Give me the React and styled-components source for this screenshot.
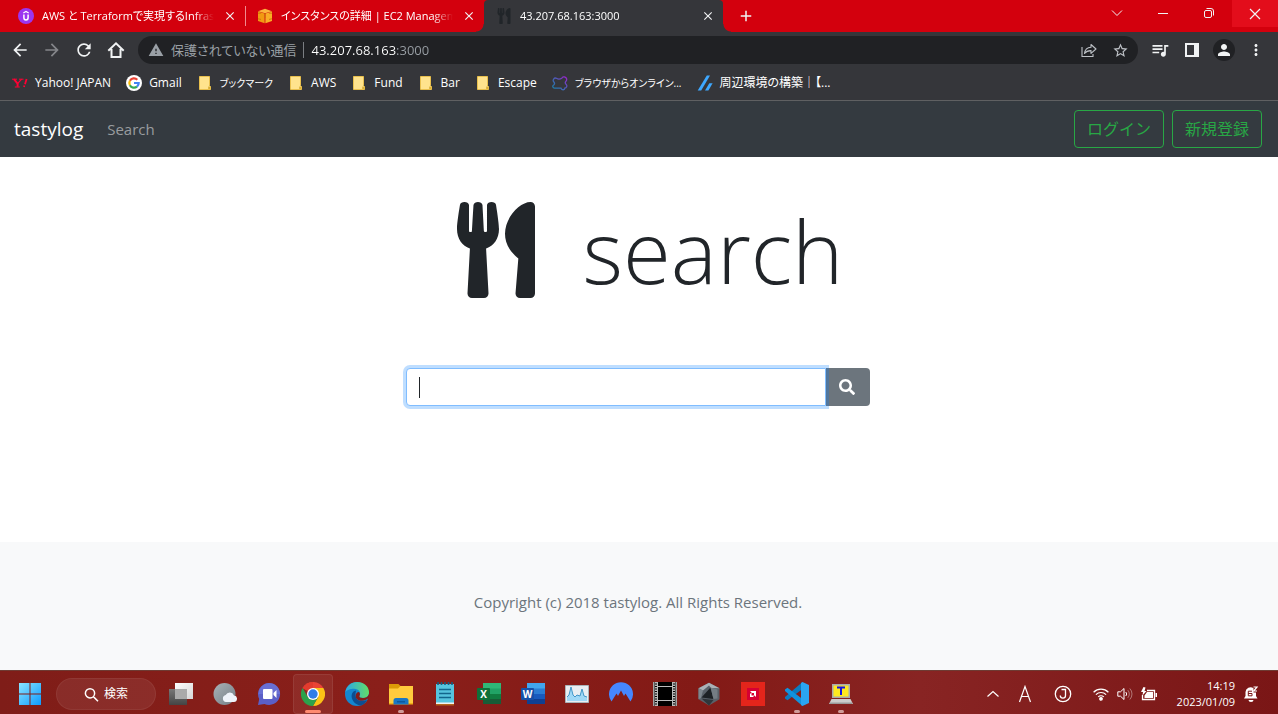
import React from "react";
import styled, { createGlobalStyle, css } from "styled-components";
import { FaUtensils, FaSearch } from "react-icons/fa";
import {
  MdArrowBack,
  MdArrowForward,
  MdRefresh,
  MdWarning,
  MdStarOutline,
  MdQueueMusic,
  MdPerson,
  MdMoreVert,
  MdClose,
  MdAdd,
} from "react-icons/md";

const GlobalStyle = createGlobalStyle`
  *, *::before, *::after { box-sizing: border-box; }
  body {
    margin: 0;
    color: #212529;
    background: #fff;
    font-family: "Open Sans", "Noto Sans CJK JP", sans-serif;
    font-size: 15px;
    line-height: 24px;
  }
  button, input { font: inherit; color: inherit; }
  button { margin: 0; padding: 0; border: 0; background: none; cursor: pointer; }
  a { color: inherit; text-decoration: none; }
  svg { display: block; flex: none; }
`;

const Screen = styled.div`
  display: flex;
  flex-direction: column;
  min-height: 100vh;
`;

/* ---------- browser window ---------- */

const TabStrip = styled.div`
  display: flex;
  height: 32px;
  padding-left: 6px;
  background: #d3000d;
  color: #fff;
`;

const Tab = styled.div`
  position: relative;
  display: flex;
  align-items: center;
  flex: 0 1 239px;
  min-width: 0;
  gap: 8px;
  padding: 0 7px 0 12px;
  ${(p) =>
    p.$divided &&
    css`
      &::after {
        content: "";
        position: absolute;
        right: -1px;
        top: 6px;
        width: 1px;
        height: 20px;
        background: #f08a8f;
      }
    `}
  ${(p) =>
    p.$active &&
    css`
      background: #35363a;
      border-radius: 4px 4px 0 0;
      &::before,
      &::after {
        content: "";
        position: absolute;
        bottom: 0;
        width: 8px;
        height: 8px;
      }
      &::before {
        right: 100%;
        background: radial-gradient(circle at 0 0, #d3000d 7px, #35363a 8px);
      }
      &::after {
        left: 100%;
        background: radial-gradient(circle at 100% 0, #d3000d 7px, #35363a 8px);
      }
    `}
`;

const TabTitle = styled.span`
  flex: 1;
  overflow: hidden;
  white-space: nowrap;
  font-size: 11px;
  line-height: 16px;
  font-feature-settings: "palt";
  mask-image: linear-gradient(to right, #000 calc(100% - 20px), transparent);
`;

const IconButton = styled.button`
  display: flex;
  flex: none;
  align-items: center;
  justify-content: center;
  width: ${(p) => p.$width || 32}px;
  height: ${(p) => p.$height || 28}px;
  color: ${(p) => p.$color || "#f1f3f4"};
  background: ${(p) => p.$background || "none"};
`;

const NewTab = styled(IconButton)`
  align-self: center;
  margin-left: 12px;
`;

const WindowControls = styled.div`
  display: flex;
  margin-left: auto;
`;

const Toolbar = styled.div`
  display: flex;
  align-items: center;
  height: 36px;
  padding: 0 6px 0 4px;
  background: #35363a;
`;

const AddressBar = styled.div`
  display: flex;
  flex: 1;
  align-items: center;
  height: 28px;
  margin: 0 6px;
  padding: 0 6px 0 10px;
  gap: 7px;
  border-radius: 14px;
  background: #202124;
  color: #9aa0a6;
  font-size: 13px;
  font-feature-settings: "palt";
`;

const Divider = styled.span`
  width: 1px;
  height: 16px;
  background: #7b7e82;
`;

const Url = styled.input`
  flex: 1;
  min-width: 0;
  padding: 0;
  border: 0;
  outline: 0;
  color: transparent;
  background: linear-gradient(90deg, #fff 85px, #9aa0a6 85px);
  background-clip: text;
`;

const Avatar = styled.span`
  display: flex;
  align-items: center;
  justify-content: center;
  width: 22px;
  height: 22px;
  border-radius: 50%;
  background: #202124;
`;

const Bookmarks = styled.nav`
  display: flex;
  align-items: center;
  gap: 15px;
  height: 33px;
  padding: 0 12px 2px;
  border-bottom: 1px solid #5f6062;
  background: #35363a;
`;

const Bookmark = styled.a`
  display: flex;
  align-items: center;
  gap: 7px;
  color: #fff;
  font-size: ${(p) => (p.$kana ? 10 : 12)}px;
  line-height: 20px;
  white-space: nowrap;
  font-feature-settings: "palt";
`;

/* ---------- tastylog page ---------- */

const Navbar = styled.header`
  display: flex;
  align-items: center;
  height: 56px;
  padding: 0 16px 0 14px;
  background: #343a40;
`;

const Brand = styled.a`
  margin-right: 24px;
  color: #fff;
  font-size: 19px;
  line-height: 30px;
`;

const NavLink = styled.a`
  color: #999c9f;
`;

const NavActions = styled.div`
  display: flex;
  gap: 8px;
  margin-left: auto;
`;

const OutlineButton = styled.button`
  height: 38px;
  padding: 0 12px;
  border: 1px solid #28a745;
  border-radius: 4px;
  color: #28a745;
  font-size: 16px;
`;

const Main = styled.main`
  display: flex;
  flex: 1;
  flex-direction: column;
  align-items: center;
  padding: 32px 18px 32px 16px;
`;

const Hero = styled.h1`
  display: flex;
  align-items: center;
  gap: 48px;
  height: 122px;
  margin: 0 0 57px;
  padding-left: 24px;
  font-size: 87px;
  font-weight: 300;
  line-height: 122px;
`;

const HeroIcon = styled(FaUtensils)`
  width: 78px;
  height: 96px;
`;

const SearchForm = styled.form`
  display: flex;
  width: 100%;
  max-width: 464px;
`;

const SearchField = styled.div`
  position: relative;
  z-index: 1;
  flex: 1;
  &::before {
    content: "";
    position: absolute;
    left: 13px;
    top: 9px;
    width: 1px;
    height: 21px;
    background: #212529;
  }
`;

const SearchInput = styled.input`
  display: block;
  width: 100%;
  height: 38px;
  padding: 6px 12px;
  border: 1px solid #80bdff;
  border-radius: 4px 0 0 4px;
  outline: 0;
  background: #fff;
  box-shadow: 0 0 0 3px rgba(0, 123, 255, 0.25);
`;

const SearchButton = styled.button`
  display: flex;
  align-items: center;
  justify-content: center;
  width: 44px;
  height: 38px;
  padding-right: 2px;
  border-radius: 0 4px 4px 0;
  background: #6c757d;
  color: #fff;
`;

const Footer = styled.footer`
  padding: 48px 18px 56px 16px;
  background: #f8f9fa;
  color: #6c757d;
  text-align: center;
`;

/* ---------- taskbar ---------- */

const Taskbar = styled.div`
  display: flex;
  align-items: center;
  height: 44px;
  padding: 3px 19px 0 8px;
  border-top: 1px solid #6e3b33;
  background: linear-gradient(90deg, #7f1d18, #8a1f1a 30%, #831a16 55%, #882423 72%, #7a1616);
  color: #fff;
`;

const TaskButton = styled.button`
  position: relative;
  display: flex;
  flex: none;
  align-items: center;
  justify-content: center;
  width: 44px;
  height: 40px;
  ${(p) =>
    p.$active &&
    css`
      &::before {
        content: "";
        position: absolute;
        inset: 0 2px;
        border: 1px solid rgba(255, 255, 255, 0.08);
        border-radius: 4px;
        background: rgba(255, 255, 255, 0.06);
      }
    `}
  ${(p) =>
    (p.$active || p.$running) &&
    css`
      &::after {
        content: "";
        position: absolute;
        bottom: 1px;
        width: ${p.$active ? 16 : 6}px;
        height: 3px;
        border-radius: 2px;
        background: ${p.$active ? "#ff8a70" : "#cf9c9a"};
      }
    `}
  svg {
    position: relative;
  }
`;

const TaskSearch = styled.button`
  display: flex;
  align-items: center;
  justify-content: center;
  gap: 5px;
  width: 100px;
  height: 32px;
  margin: 0 3px 0 4px;
  border: 1px solid rgba(255, 255, 255, 0.06);
  border-radius: 16px;
  background: rgba(255, 255, 255, 0.07);
  font-size: 12px;
`;

const Tray = styled.div`
  display: flex;
  align-items: center;
  margin-left: auto;
`;

const TrayButton = styled.button`
  display: flex;
  align-items: center;
  justify-content: center;
  width: ${(p) => p.$width}px;
  height: 32px;
`;

const Clock = styled.time`
  width: 70px;
  margin-right: 8px;
  font-size: 11px;
  line-height: 16px;
  text-align: right;
`;

/* ---------- drawings ---------- */

const Udemy = () => (
  <svg width="16" height="16" viewBox="0 0 16 16">
    <circle cx="8" cy="8" r="8" fill="#9b35f0" />
    <path d="M5.3 4.9 8 3.4l2.700 1.500" fill="none" stroke="#fff" strokeWidth="1.200" />
    <path d="M5.900 6.400v3.400a2.100 2.100 0 0 0 4.200 0V6.400" fill="none" stroke="#fff" strokeWidth="1.500" />
  </svg>
);

const Cube = () => (
  <svg width="16" height="16" viewBox="0 0 16 16">
    <path d="M1 3.2 8 .8l7 2.4L8 5.2z" fill="#fcb43c" />
    <path d="M1 3.6 7.6 5.6v9.6L1 13z" fill="#f19a12" />
    <path d="M15 3.6 8.4 5.6v9.6L15 13z" fill="#f9ad25" />
    <path d="M1 5.2h3M1 10.8l3 .6M15 5.2h-3M15 10.8l-3 .6M8 5v5" stroke="#c56f08" strokeWidth=".8" />
  </svg>
);

const Yahoo = () => (
  <svg width="16" height="16" viewBox="0 0 16 16" stroke="#ff0033" fill="none">
    <path d="M0 4.2h5M7 4.2h4.5M2.8 12h5" strokeWidth="1" />
    <path d="M2 4.2 5.6 8.6v3.2" strokeWidth="2" />
    <path d="M9.6 4.2 5.8 8.4" strokeWidth="1.2" />
    <path d="M14.6 4 13 9.2M12.4 10.6l-.4 1.4" strokeWidth="1.8" />
  </svg>
);

const Google = () => (
  <svg width="16" height="16" viewBox="0 0 16 16" fill="none">
    <circle cx="8" cy="8" r="8" fill="#fff" />
    <g strokeWidth="2.200">
      <path d="M11.300 4.700A4.700 4.700 0 0 0 3.900 5.800" stroke="#ea4335" />
      <path d="M3.900 5.800a4.700 4.700 0 0 0 0 4.400" stroke="#fbbc05" />
      <path d="M3.900 10.200a4.700 4.700 0 0 0 7.100 1.400" stroke="#34a853" />
      <path d="M11 11.600A4.700 4.700 0 0 0 12.700 8H8" stroke="#4285f4" />
    </g>
  </svg>
);

const Home = () => (
  <svg width="18" height="18" viewBox="0 0 18 18" fill="none" stroke="currentColor" strokeWidth="2">
    <path d="M1.300 9.700 9 2.300l7.700 7.400M4.500 8v8h9V8" />
  </svg>
);

const Folder = () => (
  <svg width="16" height="16" viewBox="0 0 16 16">
    <path d="M2.5 1.5h10v9.2l1 .8v3h-11z" fill="#ffe38d" stroke="#e9c04d" />
    <path d="M11.2 14V11.5l2 .2V14z" fill="#d9ad35" />
  </svg>
);

const Bear = () => (
  <svg width="16" height="16" viewBox="0 0 16 16" fill="none">
    <defs>
      <linearGradient id="bear" x1="0" y1="1" x2="1" y2="0">
        <stop offset="0" stopColor="#1684a7" />
        <stop offset=".6" stopColor="#5754b8" />
        <stop offset="1" stopColor="#a11fd0" />
      </linearGradient>
    </defs>
    <path
      d="M9 13.200H2.500a1.700 1.700 0 0 1-.8-3.200c1-.8 1-2 .2-3A2.300 2.300 0 0 1 4.500 3.300C6 4.300 8 4.300 9.800 3.200a2.600 2.600 0 1 1 4 3.200c-.8 1-.8 2 .4 3a2.200 2.200 0 0 1-1.400 3.700c0 2-2.800 2.400-3.800.1z"
      stroke="url(#bear)"
      strokeWidth="1.300"
    />
  </svg>
);

const Slashes = () => (
  <svg width="16" height="16" viewBox="0 0 16 16" fill="#3ea8ff">
    <path d="M.7 15.500h3.500L13 .500h-3.200z" />
    <path d="M8 15.500h3.400L15.600 8.200h-3.300z" />
  </svg>
);

const Share = () => (
  <svg width="16" height="16" viewBox="0 0 16 16" fill="none" stroke="currentColor" strokeWidth="1.1">
    <path d="M1 5v9.500h11V12" />
    <path d="M3.500 11.500C4 7.500 6.500 5.500 10 5.300V2.500l5 4.500-5 4.300V8.600c-3-.1-5 .9-6.500 2.900z" strokeLinejoin="round" />
  </svg>
);

const SidePanel = () => (
  <svg width="14" height="14" viewBox="0 0 14 14">
    <path fillRule="evenodd" d="M0 0h14v14H0zM2 2v10h7V2z" fill="#f1f3f4" />
  </svg>
);

const Stroke = ({ d, size = 12, width = 1 }) => (
  <svg width={size} height={size} viewBox="0 0 12 12" fill="none" stroke="currentColor" strokeWidth={width}>
    <path d={d} />
  </svg>
);

const Art = ({ children }) => (
  <svg width="24" height="24" viewBox="0 0 24 24">
    {children}
  </svg>
);

const Windows = () => (
  <Art>
    <defs>
      <linearGradient id="win" x1="0" y1="0" x2="1" y2="1">
        <stop offset="0" stopColor="#8be4ff" />
        <stop offset="1" stopColor="#0d9bff" />
      </linearGradient>
    </defs>
    <path d="M1 1h10.500v10.500H1zM12.500 1H23v10.500H12.500zM1 12.500h10.500V23H1zM12.500 12.500H23V23H12.500z" fill="url(#win)" />
  </Art>
);

const TaskView = () => (
  <Art>
    <defs>
      <linearGradient id="tvA" x1="0" y1="0" x2="1" y2="1">
        <stop offset="0" stopColor="#fff" />
        <stop offset="1" stopColor="#d6d6d6" />
      </linearGradient>
      <linearGradient id="tvB" x1="0" y1="0" x2="0" y2="1">
        <stop offset="0" stopColor="#777" />
        <stop offset="1" stopColor="#444" />
      </linearGradient>
    </defs>
    <path d="M6 1h18v16H6z" fill="url(#tvA)" />
    <path d="M0 7h18v16H0z" fill="url(#tvB)" />
    <path d="M6 7h12v10H6z" fill="#aaa" />
  </Art>
);

const Weather = () => (
  <Art>
    <defs>
      <linearGradient id="moon" x1="0" y1="0" x2="1" y2="1">
        <stop offset="0" stopColor="#a9b2b7" />
        <stop offset="1" stopColor="#737e86" />
      </linearGradient>
    </defs>
    <circle cx="11.500" cy="12" r="11" fill="url(#moon)" />
    <path d="M13 20a3.500 3.500 0 0 1-.3-6.900 4.500 4.500 0 0 1 8.300.4 3.200 3.200 0 0 1-.5 6.500z" fill="#eef3fa" />
  </Art>
);

const Chat = () => (
  <Art>
    <path d="M12 1a11 11 0 1 1-4.500 21L1 23l1.200-6A11 11 0 0 1 12 1z" fill="#5b5fc7" />
    <path d="M12 1a11 11 0 0 1 11 11H1.500A11 11 0 0 1 12 1z" fill="#7379da" opacity=".6" />
    <rect x="6" y="7" width="9.500" height="10" rx="1" fill="#fff" />
    <path d="m16.500 11 3-3v8l-3-3z" fill="#fff" />
  </Art>
);

const Chrome = () => (
  <Art>
    <path d="M12 12 1.600 6A12 12 0 0 1 22.400 6z" fill="#ea4335" />
    <path d="M12 12V6h10.400A12 12 0 0 1 12 24l5.200-9z" fill="#fbc116" />
    <path d="M12 24A12 12 0 0 1 1.600 6l5.200 9 5.200 3 5.200-3z" fill="#2ba24c" />
    <path d="M12 12 1.600 6A12 12 0 0 1 12 0v6z" fill="#e33b2e" />
    <circle cx="12" cy="12" r="6" fill="#fff" />
    <circle cx="12" cy="12" r="4.700" fill="#2f7de9" />
  </Art>
);

const Edge = () => (
  <Art>
    <defs>
      <linearGradient id="edgeA" x1="0" y1="0" x2="1" y2="0">
        <stop offset="0" stopColor="#2aa8e8" />
        <stop offset="1" stopColor="#63dd66" />
      </linearGradient>
    </defs>
    <circle cx="12" cy="12" r="12" fill="#1486cf" />
    <path d="M.3 10C1.500 4 6 0 12 0c7 0 12 4.800 12 10.200 0 3.600-2.700 5.800-6 5.800-2.800 0-4-1-3.600-2 2-3-.2-7.200-5.400-7.200C5 6.800 1.500 8.500.3 10z" fill="url(#edgeA)" />
    <path d="M11 8.400c-4 .6-5 4.600-4 8 1 3.600 4.500 6.400 9 7 3-1 5-3 6-5.400-6 2.600-11 .2-11.500-4-.2-2 .2-3.600.5-5.600z" fill="#0c4e91" />
    <path d="M14.400 14c.8-1 .8-3-.4-4-2 0-3.600 2-3.400 4.400.4 3.600 5.400 5.600 10.400 3.400l2-1.200-.5 2.400L24 16V12c-1 3-3.500 4-6 4-2.800 0-4-1-3.600-2z" fill="#841c18" />
  </Art>
);

const Explorer = () => (
  <Art>
    <path d="M0 4h24v18H0z" fill="#ffcb3d" />
    <path d="M0 2h9.500L11.500 4 9 6.500H0z" fill="#dc9a07" />
    <path d="M0 21h24v1.500H0z" fill="#f1ae17" />
    <path d="M4.500 22.500v-4a2.500 2.500 0 0 1 2.500-2.500h10a2.500 2.500 0 0 1 2.500 2.500v4z" fill="#1976c4" />
    <path d="M8 19h8v1.500H8z" fill="#0c599e" />
  </Art>
);

const Notepad = () => (
  <Art>
    <path d="M3 2h18v19H3z" fill="#56c4de" />
    <path d="M3 21h18v2.500H3z" fill="#b5651d" />
    <path d="M3 20.500h18V22H3z" fill="#f2f2f2" />
    <path d="M5 0v3M8.500 0v3M12 0v3M15.500 0v3M19 0v3" stroke="#135d80" strokeWidth="1.600" />
    <path d="M6 7.500h12M6 11.500h12M6 15.500h12" stroke="#12668c" strokeWidth="1.500" />
  </Art>
);

const Office = ({ colors, letter }) => (
  <Art>
    <path d="M6 1h18v21H6z" fill={colors[0]} />
    <path d="M6 6.500h18V22H6z" fill={colors[1]} />
    <path d="M6 12h18v10H6z" fill={colors[2]} />
    <path d="M6 17h18v5H6z" fill={colors[3]} />
    <rect y="6" width="13" height="12" rx="1" fill={colors[4]} />
    <text x="6.500" y="15.500" textAnchor="middle" fontSize="10" fontWeight="700" fill="#fff">
      {letter}
    </text>
  </Art>
);

const Monitor = () => (
  <Art>
    <path d="M.5 3.500h23v17H.5z" fill="#e9eef2" stroke="#aab4ba" />
    <path d="M2 19v-4l2-2 2-8 2 8 2 2 2-2 3 1 2-7 2 7 3 1v4z" fill="#9fd8f6" />
    <path d="m2 15 2-2 2-8 2 8 2 2 2-2 3 1 2-7 2 7 3 1" fill="none" stroke="#4096c8" />
  </Art>
);

const Nord = () => (
  <Art>
    <path
      d="M2.500 19.500A12 12 0 1 1 21.500 19.500L16.500 11.500 15 14 12 8.500 9 14 7.500 11.500z"
      fill="#4687ff"
    />
  </Art>
);

const Film = () => (
  <Art>
    <path d="M0 0h24v24H0z" fill="#000" />
    <path d="M.8 0v24M23.200 0v24" stroke="#aaa" strokeWidth="1.500" />
    <path d="M3 0v24M21 0v24" stroke="#ccc" strokeWidth="1.800" strokeDasharray="1.500 1" />
    <path d="M4.500 0v24M19.500 0v24M5 4.500h14M5 18.500h14" stroke="#bbb" />
  </Art>
);

const Hexagon = () => (
  <Art>
    <path d="m12 .8 10.500 5.500v11L12 23.500 1.500 17.300v-11z" fill="#596169" />
    <path d="m12 .8 10.500 5.500L14 6 12 3.500 6 8.500l-4.500-2.200z" fill="#aab1b6" />
    <path d="M1.500 6.300 6 8.500 4 16l-2.500 1.300z" fill="#7d868d" />
    <path d="M13.500 5.500 16.500 17 4.500 15.500z" fill="#1d2226" />
    <path d="m13.500 5.500 7 2v9l-4 .5z" fill="#747d84" />
    <path d="m4.500 16.500 12 1.500-4.500 5.500z" fill="#30363b" />
  </Art>
);

const Amd = () => (
  <Art>
    <path d="M0 0h24v24H0z" fill="#e4251b" />
    <path d="M6 6h12v12H6z" fill="#d60032" />
    <path d="M9 9h6v6l-2-2v-2h-2z M9 12l1.500-1.500v3h3L12 15H9z" fill="#fff" />
  </Art>
);

const VsCode = () => (
  <Art>
    <path d="M17.500 0v7L2.500 18.300 0 16.500v-1.500z" fill="#0b7bc0" />
    <path d="M17.500 24v-7L2.500 5.700 0 7.500V9z" fill="#1292de" />
    <path d="M17.500 0 24 3v18l-6.500 3-1.500-1V1z" fill="#2aa5f2" />
  </Art>
);

const Terminal = () => (
  <Art>
    <path d="M3 2h18v14H3z" fill="#aaa" />
    <path d="M4.500 3.500h15v11h-15z" fill="#ffe91f" />
    <path d="M8 5.500h8M12 5v8" stroke="#1515e0" strokeWidth="2" fill="none" />
    <path d="M2.500 17h19L24 22H0z" fill="#ccc" />
    <path d="M1 20.500h22l.5 1.500H.5z" fill="#999" />
  </Art>
);

const Wifi = () => (
  <svg width="16" height="14" viewBox="0 0 16 14" fill="none" stroke="#fff" strokeWidth="1.200">
    <path d="M.6 5.200a10.500 10.500 0 0 1 14.800 0M2.900 7.600a7.200 7.200 0 0 1 10.200 0M5.200 9.900a4 4 0 0 1 5.600 0" />
    <circle cx="8" cy="11.800" r="1.300" fill="#fff" />
  </svg>
);

const Volume = () => (
  <svg width="16" height="14" viewBox="0 0 16 14" fill="none" stroke="#fff">
    <path d="M.8 4.800h2.700L7 1.500v11L3.500 9.200H.8zM8.800 5a3 3 0 0 1 0 4" />
    <path d="M10.800 3.200a5.500 5.500 0 0 1 0 7.600M12.800 1.500a8 8 0 0 1 0 11" opacity=".4" />
  </svg>
);

const Battery = () => (
  <svg width="18" height="14" viewBox="0 0 18 14">
    <path d="M7 3.500h7.500v9h-12V8" fill="none" stroke="#fff" strokeWidth="1.300" />
    <path d="M7 5h6v6H4.500V8.500zM15.500 6H17v4h-1.500z" fill="#fff" />
    <path d="M3.500 0 1 5h2L2.500 8.500 6.500 4h-2L5.500.5z" fill="#fff" />
  </svg>
);

const Bell = () => (
  <svg width="16" height="16" viewBox="0 0 16 16">
    <path d="M1 12.500 2.500 10V6a5 5 0 0 1 8-3.800v4.300H13V10l1.500 2.500z" fill="#fff" />
    <path d="M5.500 14h5a2.500 2 0 0 1-5 0z" fill="#fff" />
    <path d="M10.500 1h3.500l-3.300 4H14" fill="none" stroke="#fff" strokeWidth="1.200" />
    <path d="M9 5.200H5.300v4.600H9V7.500H5.300" fill="none" stroke="#7a1616" strokeWidth="1" />
  </svg>
);

const ImeLetter = () => (
  <svg width="14" height="18" viewBox="0 0 14 18" fill="none" stroke="#fff" strokeWidth="1.200">
    <path d="M1.500 17 7 1.500 12.500 17M3.500 11.500h7" />
  </svg>
);

const ImeMark = () => (
  <svg width="18" height="18" viewBox="0 0 18 18" fill="none" stroke="#fff" strokeWidth="1.300">
    <circle cx="9" cy="9" r="7.700" />
    <path d="M7.500 4.500h4v6a2.600 2.600 0 0 1-5.200 0" />
  </svg>
);

const bookmarks = [
  { name: "Yahoo! JAPAN", Icon: Yahoo },
  { name: "Gmail", Icon: Google },
  { name: "ブックマーク", Icon: Folder, kana: true },
  { name: "AWS", Icon: Folder },
  { name: "Fund", Icon: Folder },
  { name: "Bar", Icon: Folder },
  { name: "Escape", Icon: Folder },
  { name: "ブラウザからオンライン...", Icon: Bear, kana: true },
  { name: "周辺環境の構築｜【...", Icon: Slashes },
];

const Excel = () => <Office letter="X" colors={["#2fb777", "#21a366", "#107c41", "#185c37", "#0f7038"]} />;
const Word = () => <Office letter="W" colors={["#41a5ee", "#2b7cd3", "#185abd", "#103f91", "#1650a8"]} />;

const apps = [
  ["Task view", TaskView],
  ["Weather", Weather],
  ["Chat", Chat],
  ["Chrome", Chrome, "active"],
  ["Edge", Edge],
  ["Explorer", Explorer, "running"],
  ["Notepad", Notepad],
  ["Excel", Excel],
  ["Word", Word],
  ["Performance monitor", Monitor],
  ["VPN", Nord],
  ["Video", Film],
  ["Cube", Hexagon],
  ["AMD", Amd],
  ["VS Code", VsCode, "running"],
  ["Terminal", Terminal, "running"],
];

const BrowserTab = ({ icon, title, active, divided }) => (
  <Tab $active={active} $divided={divided}>
    {icon}
    <TabTitle>{title}</TabTitle>
    <IconButton $width={16} $height={16} aria-label="Close tab">
      <MdClose size={14} />
    </IconButton>
  </Tab>
);

export default function App() {
  return (
    <Screen>
      <GlobalStyle />
      <TabStrip>
        <BrowserTab icon={<Udemy />} title="AWS と Terraformで実現するInfras" divided />
        <BrowserTab icon={<Cube />} title="インスタンスの詳細 | EC2 Managem" />
        <BrowserTab icon={<FaUtensils size={16} color="#212529" />} title="43.207.68.163:3000" active />
        <NewTab $width={22} $height={22} aria-label="New tab">
          <MdAdd size={18} />
        </NewTab>
        <WindowControls>
          <IconButton $width={46} $height={25} aria-label="Search tabs">
            <Stroke d="M1 3.500 6 8.500 11 3.500" />
          </IconButton>
          <IconButton $width={46} $height={25} aria-label="Minimize">
            <Stroke d="M1 6.500h10" />
          </IconButton>
          <IconButton $width={46} $height={25} aria-label="Restore">
            <Stroke d="M3 3.500h4a1.500 1.500 0 0 1 1.500 1.500v4A1.500 1.500 0 0 1 7 10.500H3A1.500 1.500 0 0 1 1.500 9V5A1.500 1.500 0 0 1 3 3.500zM3.500 1.500H8A2.500 2.500 0 0 1 10.500 4v4.500" />
          </IconButton>
          <IconButton $width={46} $height={27} $background="#e30d1b" aria-label="Close">
            <Stroke d="M1 1 11 11M11 1 1 11" width={1.2} />
          </IconButton>
        </WindowControls>
      </TabStrip>

      <Toolbar>
        <IconButton aria-label="Back"><MdArrowBack size={20} /></IconButton>
        <IconButton aria-label="Forward" $color="#85868a"><MdArrowForward size={20} /></IconButton>
        <IconButton aria-label="Reload"><MdRefresh size={20} /></IconButton>
        <IconButton aria-label="Home"><Home /></IconButton>
        <AddressBar>
          <MdWarning size={16} />
          <span>保護されていない通信</span>
          <Divider />
          <Url type="text" aria-label="Address" defaultValue="43.207.68.163:3000" />
          <IconButton $width={24} $color="#bdc1c6" aria-label="Share"><Share /></IconButton>
          <IconButton $width={24} $color="#bdc1c6" aria-label="Bookmark"><MdStarOutline size={17} /></IconButton>
        </AddressBar>
        <IconButton aria-label="Media"><MdQueueMusic size={20} /></IconButton>
        <IconButton aria-label="Side panel"><SidePanel /></IconButton>
        <IconButton aria-label="Profile"><Avatar><MdPerson size={18} /></Avatar></IconButton>
        <IconButton aria-label="Menu"><MdMoreVert size={18} /></IconButton>
      </Toolbar>

      <Bookmarks>
        {bookmarks.map(({ name, Icon, kana }) => (
          <Bookmark href="#" key={name} $kana={kana}>
            <Icon />
            {name}
          </Bookmark>
        ))}
      </Bookmarks>

      <Navbar>
        <Brand href="#">tastylog</Brand>
        <NavLink href="#">Search</NavLink>
        <NavActions>
          <OutlineButton>ログイン</OutlineButton>
          <OutlineButton>新規登録</OutlineButton>
        </NavActions>
      </Navbar>

      <Main>
        <Hero>
          <HeroIcon />
          search
        </Hero>
        <SearchForm role="search" onSubmit={(e) => e.preventDefault()}>
          <SearchField>
            <SearchInput type="text" aria-label="Search" />
          </SearchField>
          <SearchButton aria-label="Search">
            <FaSearch size={16} />
          </SearchButton>
        </SearchForm>
      </Main>

      <Footer>Copyright (c) 2018 tastylog. All Rights Reserved.</Footer>

      <Taskbar>
        <TaskButton aria-label="Start"><Windows /></TaskButton>
        <TaskSearch>
          <Stroke d="M8.500 5a3.700 3.700 0 1 1-7.400 0 3.700 3.700 0 0 1 7.400 0zM7.500 7.700l3.700 3.700" size={15} width={1.2} />
          検索
        </TaskSearch>
        {apps.map(([name, Icon, state]) => (
          <TaskButton key={name} aria-label={name} $active={state === "active"} $running={state === "running"}>
            <Icon />
          </TaskButton>
        ))}
        <Tray>
          <TrayButton $width={32} aria-label="Hidden icons"><Stroke d="M.5 8.500 6 3.500 11.500 8.500" width={1.2} /></TrayButton>
          <TrayButton $width={32} aria-label="Input mode"><ImeLetter /></TrayButton>
          <TrayButton $width={44} aria-label="IME"><ImeMark /></TrayButton>
          <TrayButton $width={32} aria-label="Network"><Wifi /></TrayButton>
          <TrayButton $width={16} aria-label="Volume"><Volume /></TrayButton>
          <TrayButton $width={32} aria-label="Battery"><Battery /></TrayButton>
          <Clock dateTime="2023-01-09T14:19">
            14:19
            <br />
            2023/01/09
          </Clock>
          <TrayButton $width={16} aria-label="Notifications"><Bell /></TrayButton>
        </Tray>
      </Taskbar>
    </Screen>
  );
}
